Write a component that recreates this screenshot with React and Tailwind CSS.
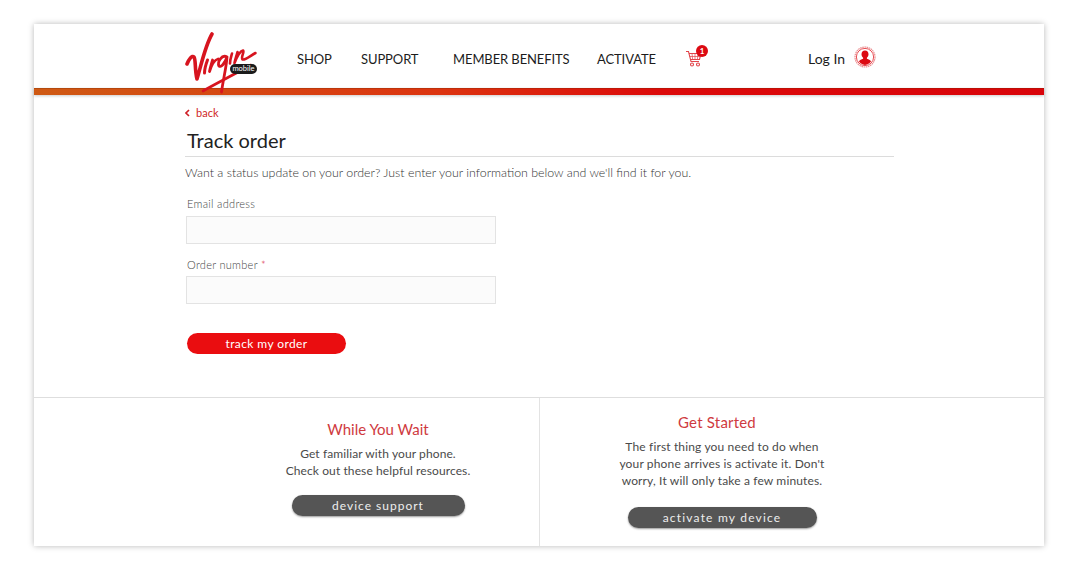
import React from 'react';

const font = { fontFamily: 'Lato, "Open Sans", sans-serif' };

function VirginLogo() {
  return (
    <div className="relative w-[74px] h-[62px]">
      <svg width="74" height="62" viewBox="0 0 74 62" fill="none" stroke="#d7141f" strokeLinecap="round" strokeLinejoin="round">
        {/* V */}
        <path d="M2 32 C4 27 7 23 9 25 C11 28 9.5 37 12 47 C16 34 20 14 27 2" strokeWidth="3.6" />
        {/* i */}
        <path d="M22.5 28 C21 32 19.5 37 19.5 41" strokeWidth="3" />
        {/* r */}
        <path d="M27.5 28 C26.5 32 25 36 24.5 39.5 C26.5 33 29 28 33 27" strokeWidth="2.8" />
        {/* g */}
        <path d="M42 25 C37 22 32 30 34 34 C36 36 40 31 42 25 C41.5 35 38 48 36.5 60" strokeWidth="2.8" />
        {/* i */}
        <path d="M47 21.5 C46 25 45 28 45 31.5" strokeWidth="2.6" />
        {/* n + flourish */}
        <path d="M52.5 20 C51.5 24 50 28 49.5 31 C51.5 26 55 19 58 18.5 C60 19.5 55.5 25 57.5 27.5 C60 28.5 65 24 70.5 21" strokeWidth="2.6" />
        {/* swoosh */}
        <path d="M18 59 C32 51 50 42 66 33" strokeWidth="2.6" />
      </svg>
      <span className="absolute left-[45px] top-[32px] w-[27px] h-[10px] rounded-full bg-[#1b1b1b] text-white text-[7.5px] leading-[10px] text-center">mobile</span>
    </div>
  );
}

function CartIcon() {
  return (
    <div className="relative w-[24px] h-[24px]">
      <svg width="18" height="18" viewBox="0 0 18 18" fill="none" stroke="#e2454b" strokeWidth="1.1" className="absolute left-0 top-[5px]">
        <path d="M1 1.5h2.5l2.5 10h8" />
        <path d="M4 3.5h12l-1.5 6h-9" />
        <path d="M7 3.5l.6 6M10 3.5v6M13 3.5l-.6 6M4.5 6.5h11" strokeWidth="0.7" />
        <circle cx="7" cy="14.5" r="1.5" />
        <circle cx="13" cy="14.5" r="1.5" />
      </svg>
      <span className="absolute left-[11px] top-0 w-[12px] h-[12px] rounded-full bg-[#dc0a12] text-white text-[8px] font-bold leading-[12px] text-center">1</span>
    </div>
  );
}

function UserIcon() {
  return (
    <svg width="22" height="22" viewBox="0 0 22 22">
      <circle cx="11" cy="11" r="10" fill="#fff" stroke="#eb8f92" strokeWidth="1.2" strokeDasharray="1.6 0.6" />
      <circle cx="11" cy="11" r="8.6" fill="#fff" stroke="#e2222a" strokeWidth="0.8" />
      <path d="M11 4.6c2.2 0 3.5 1.7 3.5 3.7 0 1.5-.7 2.8-1.6 3.5v.9c1.6.6 3.4 1.3 4.2 2.6A8.2 8.2 0 0 1 11 19a8.2 8.2 0 0 1-6.1-3.7c.8-1.3 2.6-2 4.2-2.6v-.9c-.9-.7-1.6-2-1.6-3.5 0-2 1.3-3.7 3.5-3.7z" fill="#dc0a12" />
    </svg>
  );
}

function Field({ label, required, mb, pt }) {
  return (
    <div className={mb}>
      <label className={`block h-[21px] pl-px text-[11px] leading-[17px] text-[#444] font-light tracking-[0.3px] ${pt}`}>
        {label}
        {required && <span className="text-[#d7141f]"> *</span>}
      </label>
      <div className="w-[310px] h-[28px] bg-[#fbfbfb] border border-[#e3e3e3]" />
    </div>
  );
}

export default function App() {
  const navLinks = [
    { label: 'SHOP', w: 'w-[64px]' },
    { label: 'SUPPORT', w: 'w-[92px]' },
    { label: 'MEMBER BENEFITS', w: 'w-[144px]' },
    { label: 'ACTIVATE', w: 'w-[88px]' },
  ];

  return (
    <div className="w-[1076px] h-[570px] bg-white pt-[24px] pl-[34px]" style={font}>
      <div className="w-[1010px] h-[522px] bg-white shadow-[0_0_6px_rgba(0,0,0,0.28)] flex flex-col">
        {/* Header */}
        <header className="h-[64px] flex items-start pl-[151px] shrink-0">
          <div className="w-[112px] pt-[8px]">
            <VirginLogo />
          </div>
          <nav className="flex items-center h-[71px] text-[13px] tracking-[-0.1px] text-[#1c1c1c]">
            {navLinks.map(link => (
              <span key={link.label} className={link.w}>{link.label}</span>
            ))}
          </nav>
          <div className="pt-[21px]">
            <CartIcon />
          </div>
          <div className="flex items-center h-[69px] ml-[99px] text-[14px] text-[#1c1c1c]">Log In</div>
          <div className="pt-[22px] ml-[9px]">
            <UserIcon />
          </div>
        </header>

        {/* Red gradient bar */}
        <div className="h-[8px] shrink-0">
          <div className="h-[7px] bg-[linear-gradient(90deg,#cf5a14_0%,#dc3410_40%,#dc0a0a_62%,#d9040a_100%)] shadow-[inset_0_1px_0_rgba(120,40,0,0.3),0_1px_3px_rgba(0,0,0,0.2)]" />
        </div>

        {/* Form */}
        <main className="flex-1 pl-[151px]">
          <a className="flex items-center gap-[6px] h-[18px] mt-[8px] text-[11px] text-[#cf1f26]">
            <svg width="5" height="8" viewBox="0 0 5 8" fill="none" stroke="#cf1f26" strokeWidth="1.6"><path d="M4 1L1 4l3 3" /></svg>
            back
          </a>
          <h1 className="w-[709px] h-[31px] mt-[4px] pl-[2px] border-b border-[#dcdcdc] text-[20px] leading-[28px] text-[#222]">Track order</h1>
          <p className="mt-[7px] text-[12.4px] leading-[18px] font-light text-[#333]">Want a status update on your order? Just enter your information below and we'll find it for you.</p>
          <div className="mt-[13px] pl-px">
            <Field label="Email address" mb="mb-[11px]" pt="" />
            <Field label="Order number" required pt="pt-px" />
          </div>
          <button className="block ml-[2px] mt-[29px] w-[159px] h-[21px] rounded-full bg-[#ea0d10] text-white text-[12px] leading-[20px] tracking-[0.4px] text-center">track my order</button>
        </main>

        {/* Bottom panels */}
        <section className="h-[149px] shrink-0 border-t border-[#dedede] flex">
          <div className="w-[506px] border-r border-[#e3e3e3] flex flex-col items-center pl-[183px]">
            <h2 className="mt-[22px] text-[15px] leading-[18px] text-[#cf3a40]">While You Wait</h2>
            <p className="mt-[7px] text-[12px] leading-[17px] tracking-[0.1px] text-center text-[#4a4a4a] whitespace-nowrap">
              Get familiar with your phone.<br />Check out these helpful resources.
            </p>
            <button className="mt-[16px] w-[173px] h-[21px] rounded-full bg-[#555] text-[#eee] text-[12px] leading-[21px] tracking-[1px] shadow-[0_1px_2px_rgba(0,0,0,0.4)]">device support</button>
          </div>
          <div className="flex-1 flex flex-col items-center pr-[140px]">
            <h2 className="mt-[15px] mr-[10px] text-[15px] leading-[18px] tracking-[0.2px] text-[#cf3a40]">Get Started</h2>
            <p className="mt-[7px] text-[12px] leading-[17px] tracking-[0.15px] text-center text-[#4a4a4a] whitespace-nowrap">
              The first thing you need to do when<br />your phone arrives is activate it. Don't<br />worry, It will only take a few minutes.
            </p>
            <button className="mt-[18px] w-[189px] h-[21px] rounded-full bg-[#555] text-[#eee] text-[12px] leading-[21px] tracking-[1.2px] shadow-[0_1px_2px_rgba(0,0,0,0.4)]">activate my device</button>
          </div>
        </section>
      </div>
    </div>
  );
}
